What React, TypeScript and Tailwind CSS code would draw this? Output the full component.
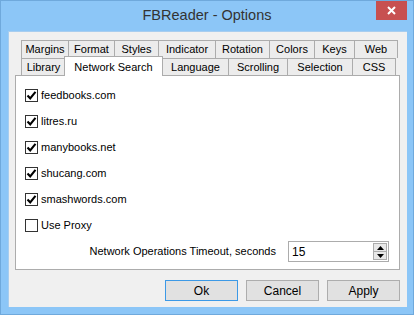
import React from 'react'

const font = { fontFamily: '"Liberation Sans", Arial, sans-serif' }

const row1 = [
  { label: 'Margins', w: 'w-[47px]' },
  { label: 'Format', w: 'w-[46px]' },
  { label: 'Styles', w: 'w-[44px]' },
  { label: 'Indicator', w: 'w-[57px]' },
  { label: 'Rotation', w: 'w-[54px]' },
  { label: 'Colors', w: 'w-[45px]' },
  { label: 'Keys', w: 'w-[40px]' },
  { label: 'Web', w: 'w-[44px]' },
]

const row2 = [
  { label: 'Library', w: 'w-[44px]' },
  { label: 'Network Search', w: 'w-[99px]', active: true },
  { label: 'Language', w: 'w-[66px]' },
  { label: 'Scrolling', w: 'w-[59px]' },
  { label: 'Selection', w: 'w-[65px]' },
  { label: 'CSS', w: 'w-[44px]' },
]

const sites = [
  { label: 'feedbooks.com', checked: true },
  { label: 'litres.ru', checked: true },
  { label: 'manybooks.net', checked: true },
  { label: 'shucang.com', checked: true },
  { label: 'smashwords.com', checked: true },
  { label: 'Use Proxy', checked: false },
]

function Tab({ label, w, active, last }: { label: string; w: string; active?: boolean; last?: boolean }) {
  if (active) {
    return (
      <div
        className={`${w} h-[20px] -mb-px relative z-10 -mx-px bg-white border border-b-0 border-[#acacac] flex items-start justify-center pt-[2px] text-black`}
      >
        {label}
      </div>
    )
  }
  return (
    <div
      className={`${w} h-full bg-[#ececec] border-l border-t ${last ? 'border-r' : ''} border-[#acacac] flex items-center justify-center text-black`}
    >
      {label}
    </div>
  )
}

function Checkbox({ checked }: { checked: boolean }) {
  return (
    <div className="w-[13px] h-[13px] border border-[#333] bg-white flex items-center justify-center shrink-0">
      {checked && (
        <svg width="11" height="11" viewBox="0 0 11 11">
          <path d="M1.5 5.5 L4.2 8.3 L9.5 1.8" fill="none" stroke="#000" strokeWidth="2.1" />
        </svg>
      )}
    </div>
  )
}

function Button({ label, focused }: { label: string; focused?: boolean }) {
  return (
    <div
      className={`w-[73px] h-[21px] flex items-center justify-center bg-[#e1e1e1] border text-black text-[12px] ${
        focused ? 'border-[#3c99e6]' : 'border-[#adadad]'
      }`}
    >
      {label}
    </div>
  )
}

export default function App() {
  return (
    <div className="w-[414px] h-[315px] bg-[#8cc6f7] border border-[#6fa9dc] flex flex-col text-[11px]" style={font}>
      {/* title bar */}
      <div className="h-[30px] relative flex items-center justify-center">
        <span className="text-[14.5px] text-[#333]">FBReader - Options</span>
        <div className="absolute right-[6px] top-0 w-[31px] h-[19px] bg-[#c75050] flex items-center justify-center">
          <svg width="9" height="9" viewBox="0 0 9 9">
            <path d="M1 1 L8 8 M8 1 L1 8" stroke="#fff" strokeWidth="2" />
          </svg>
        </div>
      </div>

      {/* client area */}
      <div className="ml-[7px] mr-[6px] h-[276px] bg-[#f0f0f0] border-t border-l border-[#a7cdef] flex flex-col pl-[6px] pr-[7px] pt-[8px]">
        {/* tabs */}
        <div className="pl-[6px] flex flex-col">
          <div className="flex h-[18px]">
            {row1.map((t, i) => (
              <Tab key={t.label} label={t.label} w={t.w} last={i === row1.length - 1} />
            ))}
          </div>
          <div className="flex items-end h-[17px]">
            {row2.map((t, i) => (
              <Tab key={t.label} label={t.label} w={t.w} active={t.active} last={i === row2.length - 1} />
            ))}
          </div>
        </div>

        {/* panel */}
        <div className="h-[195px] bg-white border border-[#acacac] flex flex-col pl-[9px] pr-[10px] pt-[13px] pb-[7px]">
          <div className="flex flex-col gap-[13px]">
            {sites.map((s) => (
              <div key={s.label} className="flex items-center gap-[3px] h-[13px]">
                <Checkbox checked={s.checked} />
                <span className="text-black text-[11px] leading-none">{s.label}</span>
              </div>
            ))}
          </div>
          <div className="mt-auto flex items-center justify-end gap-[12px]">
            <span className="text-black">Network Operations Timeout, seconds</span>
            <div className="w-[101px] h-[21px] border border-[#acacac] bg-white flex items-center">
              <span className="flex-1 pl-[3px] text-[12px] text-black">15</span>
              <div className="w-[15px] h-full flex flex-col py-px pr-px">
                <div className="flex-1 bg-[#e8e8e8] border border-[#acacac] flex items-center justify-center">
                  <svg width="7" height="4" viewBox="0 0 7 4">
                    <path d="M0 4 L3.5 0 L7 4 Z" fill="#000" />
                  </svg>
                </div>
                <div className="flex-1 bg-[#e8e8e8] border border-t-0 border-[#acacac] flex items-center justify-center">
                  <svg width="7" height="4" viewBox="0 0 7 4">
                    <path d="M0 0 L3.5 4 L7 0 Z" fill="#000" />
                  </svg>
                </div>
              </div>
            </div>
          </div>
        </div>

        {/* buttons */}
        <div className="flex justify-end gap-[8px] mt-[10px]">
          <Button label="Ok" focused />
          <Button label="Cancel" />
          <Button label="Apply" />
        </div>
      </div>
    </div>
  )
}
